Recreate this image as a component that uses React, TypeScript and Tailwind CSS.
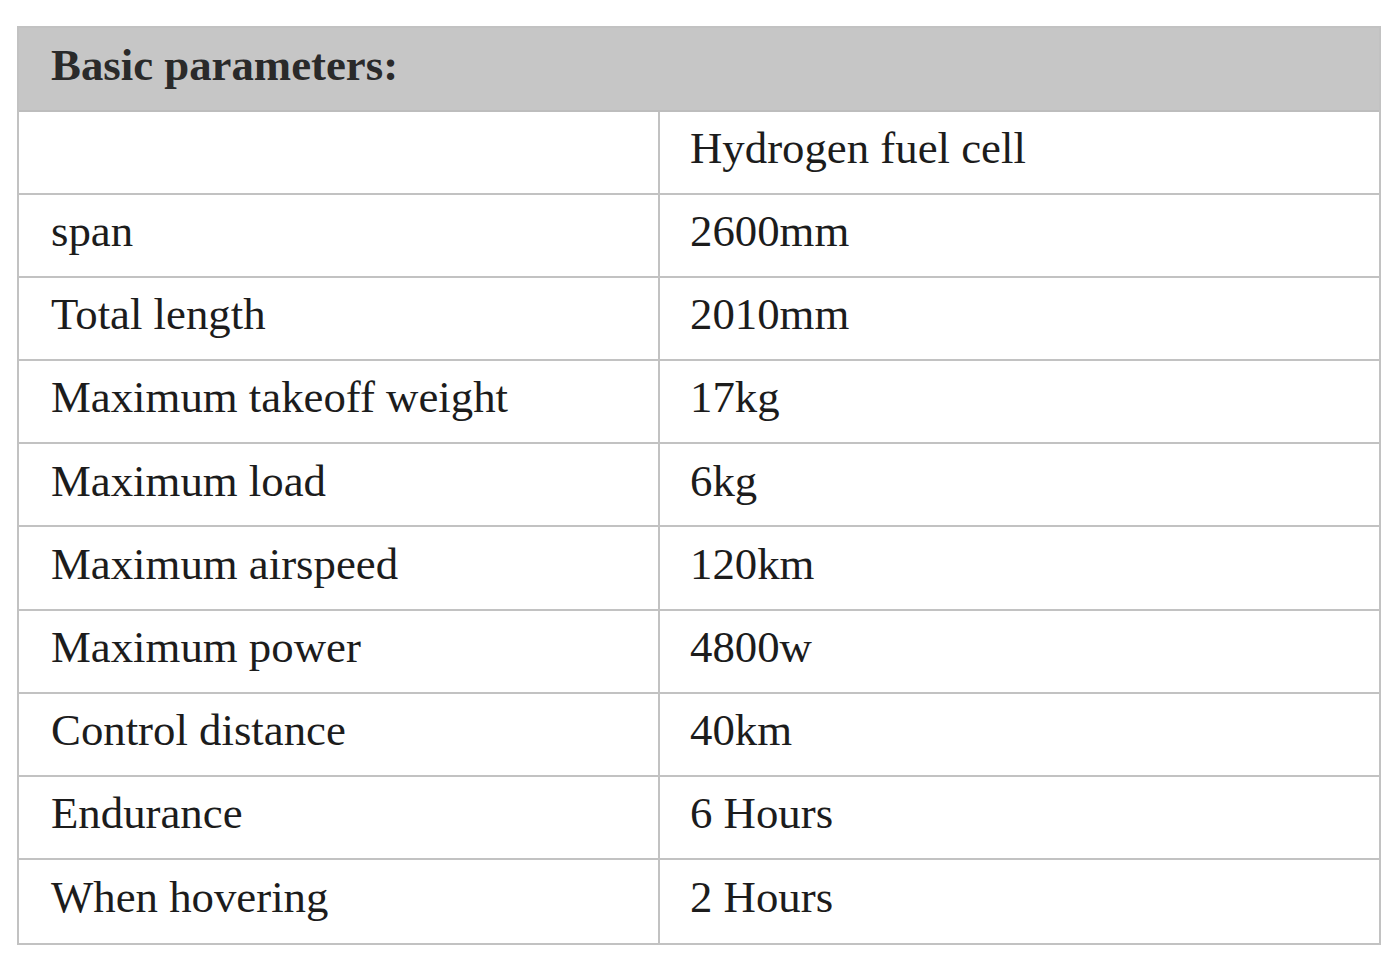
import React from 'react';

const rows: [string, string][] = [
  ['', 'Hydrogen fuel cell'],
  ['span', '2600mm'],
  ['Total length', '2010mm'],
  ['Maximum takeoff weight', '17kg'],
  ['Maximum load', '6kg'],
  ['Maximum airspeed', '120km'],
  ['Maximum power', '4800w'],
  ['Control distance', '40km'],
  ['Endurance', '6 Hours'],
  ['When hovering', '2 Hours'],
];

export default function App() {
  return (
    <div className="w-[1400px] h-[968px] bg-white pt-[26px] pl-[17px]" style={{ fontFamily: '"Liberation Serif", "Times New Roman", serif' }}>
      <div className="w-[1364px] border-2 border-[#c2c2c2] text-[44.8px] leading-none text-[#1c1c1c]">
        {/* Header */}
        <div className="h-[84px] bg-[#c6c6c6] border-b-2 border-[#bdbdbd] flex items-center pl-[32px] pb-[8px]">
          <span className="font-bold text-[#2a2a2a]">Basic parameters:</span>
        </div>

        {rows.map(([label, value], i) => (
          <div
            key={i}
            className={`h-[83.1px] grid grid-cols-[641px_1fr] ${i < rows.length - 1 ? 'border-b-2 border-[#c2c2c2]' : ''}`}
          >
            <div className="border-r-2 border-[#c2c2c2] flex items-center pl-[32px] pb-[8px]">{label}</div>
            <div className="flex items-center pl-[30px] pb-[8px]">{value}</div>
          </div>
        ))}
      </div>
    </div>
  );
}
